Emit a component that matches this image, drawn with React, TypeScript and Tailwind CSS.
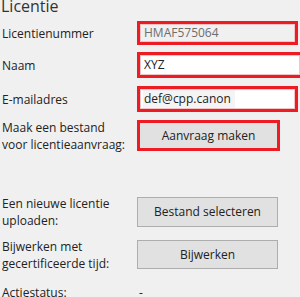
import React from "react";

const font = { fontFamily: '"Open Sans", "Noto Sans", sans-serif' };

function Label({ lines }: { lines: string[] }) {
  return (
    <div className="w-[137px] shrink-0 pl-[2px] text-[12px] leading-[17px] text-[#222]">
      {lines.map((l) => (
        <div key={l} className="whitespace-nowrap">{l}</div>
      ))}
    </div>
  );
}

export default function App() {
  return (
    <div
      className="w-[300px] h-[297px] overflow-hidden bg-[#f0f0f0] flex flex-col"
      style={font}
    >
      <div className="h-[21px] shrink-0 pl-[1px]">
        <div className="-mt-[2px] text-[16px] leading-[16px] text-[#333]">Licentie</div>
      </div>

      <div className="h-[24px] shrink-0 flex items-center">
        <Label lines={["Licentienummer"]} />
        <div className="w-[161px] h-[24px] shrink-0 border-[3px] border-[#ed1c24] bg-[#f0f0f0] flex items-center">
          <div className="h-full w-full border border-[#f3c4c6] flex items-center pl-[3px] text-[12px] text-[#6d6d6d]">
            HMAF575064
          </div>
        </div>
      </div>

      <div className="h-[26px] mt-[7px] shrink-0 flex items-center">
        <Label lines={["Naam"]} />
        <div className="w-[166px] h-[26px] shrink-0 border-[3px] border-[#ed1c24] bg-white">
          <div className="h-full w-full border border-[#f3c4c6] flex items-center pl-[3px] text-[12px] text-[#222]">
            XYZ
          </div>
        </div>
      </div>

      <div className="h-[26px] mt-[8px] shrink-0 flex items-center">
        <Label lines={["E-mailadres"]} />
        <div className="w-[161px] h-[26px] shrink-0 border-[3px] border-[#ed1c24] bg-white">
          <div className="h-full w-full border border-[#f3c4c6] flex items-center pl-[2px] text-[12px] text-[#222]">
            <span className="bg-[#f4f4f4] px-[1px] pr-[4px] leading-[18px]">def@cpp.canon</span>
          </div>
        </div>
      </div>

      <div className="h-[31px] mt-[8px] shrink-0 flex items-center">
        <Label lines={["Maak een bestand", "voor licentieaanvraag:"]} />
        <div className="w-[143px] h-[31px] shrink-0 border-[3px] border-[#ed1c24] bg-[#e1e1e1] flex items-center justify-center text-[12px] text-[#222]">
          Aanvraag maken
        </div>
      </div>

      <div className="h-[30px] mt-[46px] shrink-0 flex items-center">
        <Label lines={["Een nieuwe licentie", "uploaden:"]} />
        <div className="w-[141px] h-[30px] shrink-0 border border-[#adadad] bg-[#e1e1e1] flex items-center justify-center text-[12px] text-[#222]">
          Bestand selecteren
        </div>
      </div>

      <div className="h-[29px] mt-[13px] shrink-0 flex items-center">
        <Label lines={["Bijwerken met", "gecertificeerde tijd:"]} />
        <div className="w-[141px] h-[29px] shrink-0 border border-[#adadad] bg-[#e1e1e1] flex items-center justify-center text-[12px] text-[#222]">
          Bijwerken
        </div>
      </div>

      <div className="mt-[15px] shrink-0 flex items-center">
        <Label lines={["Actiestatus:"]} />
        <div className="pl-[2px] text-[12px] leading-[17px] text-[#222]">-</div>
      </div>
    </div>
  );
}
